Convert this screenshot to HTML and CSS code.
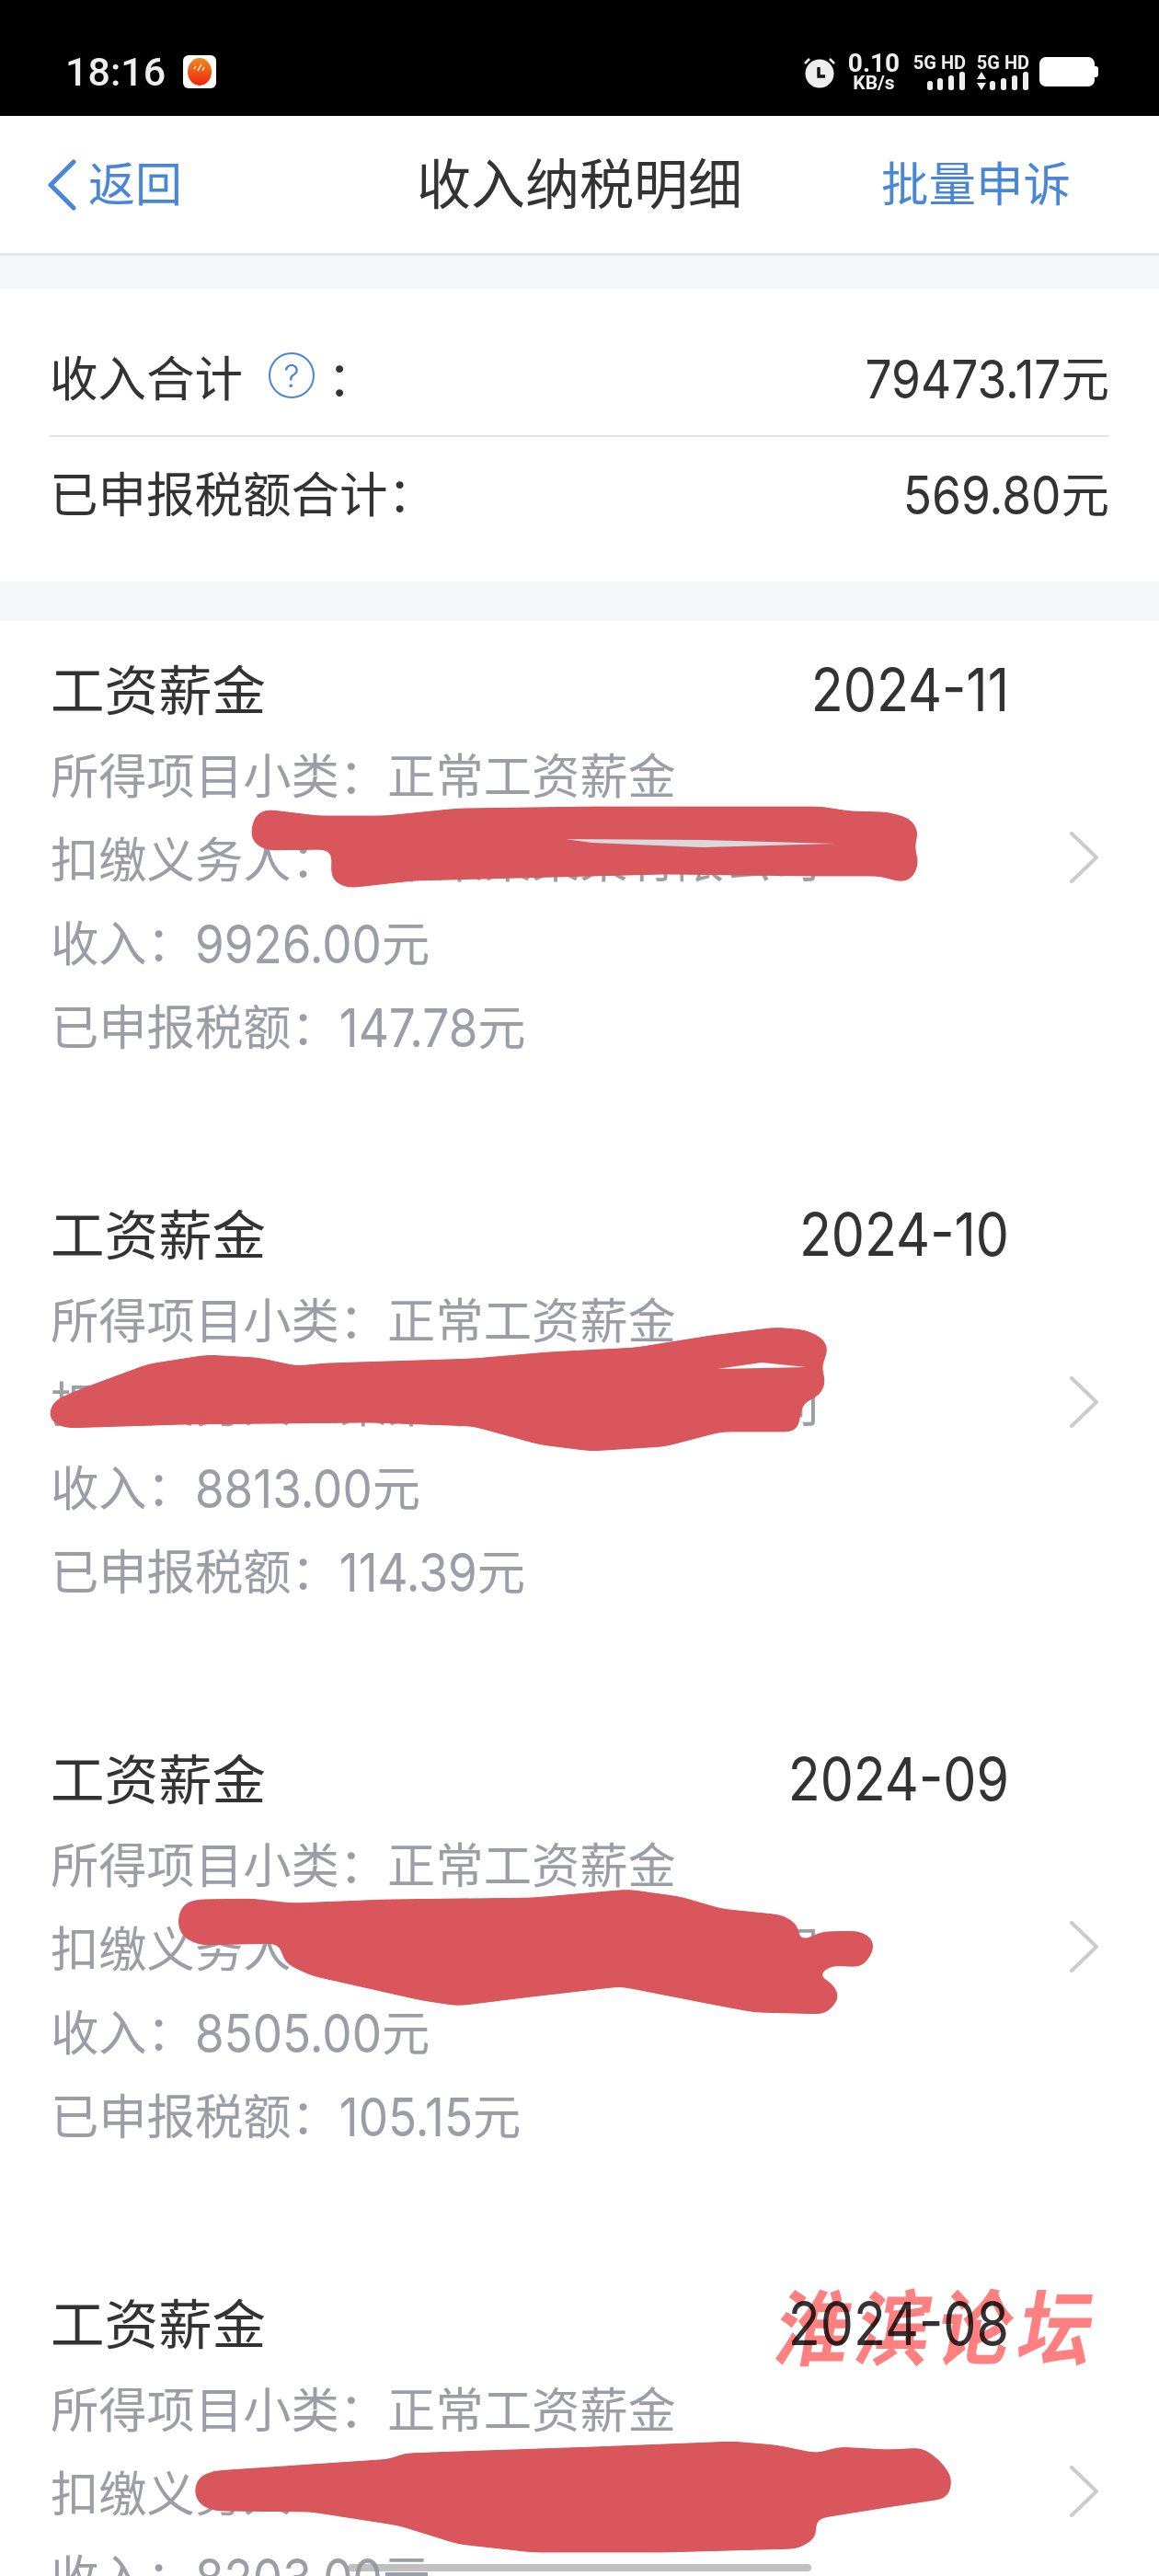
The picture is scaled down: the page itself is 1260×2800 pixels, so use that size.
FILE: index.html
```html
<!DOCTYPE html>
<html lang="zh-CN">
<head>
  <meta charset="UTF-8">
  <meta name="viewport" content="width=device-width, initial-scale=1.0">
  <title>收入纳税明细</title>
  <link rel="stylesheet" href="styles.css">
</head>
<body>

  <div class="status-bar">
    <div class="status-left">
      <span class="clock">18:16</span>
      <svg class="app-icon" width="36" height="36" viewBox="0 0 36 36">
        <defs>
          <linearGradient id="egg" x1="0" y1="0" x2="0" y2="1">
            <stop offset="0" stop-color="#ee8a1c"/>
            <stop offset="1" stop-color="#f0250f"/>
          </linearGradient>
        </defs>
        <rect width="36" height="36" rx="6" fill="#fff"/>
        <ellipse cx="18" cy="18" rx="13" ry="15" fill="url(#egg)"/>
        <path d="M12 15l2-3M16 17l4-7M21 17l2-4" stroke="#ffe3c8" stroke-width="1.6"/>
      </svg>
    </div>
    <div class="status-right">
      <svg class="alarm" width="36" height="36" viewBox="0 0 36 36">
        <circle cx="18" cy="20" r="15.5" fill="#eee"/>
        <path d="M2 9l5-5M34 9l-5-5" stroke="#eee" stroke-width="2.5"/>
        <path d="M17 13v10h7" stroke="#111" stroke-width="3.4" fill="none"/>
      </svg>
      <div class="speed">
        <span class="speed-num">0.10</span>
        <span class="speed-unit">KB/s</span>
      </div>
      <div class="signal">
        <span class="signal-label">5G HD</span>
        <svg width="58" height="20" viewBox="0 0 58 20">
          <rect x="16" y="10" width="6" height="10" rx="2.5" fill="#eee"/>
          <rect x="27" y="7" width="6" height="13" rx="2.5" fill="#eee"/>
          <rect x="39" y="4" width="6" height="16" rx="2.5" fill="#eee"/>
          <rect x="51" y="0" width="6" height="20" rx="2.5" fill="#eee"/>
        </svg>
      </div>
      <div class="signal">
        <span class="signal-label">5G HD</span>
        <svg width="58" height="20" viewBox="0 0 58 20">
          <path d="M6 0l5 8H1zM6 20l5-8H1z" fill="#eee"/>
          <rect x="15" y="10" width="6" height="10" rx="2.5" fill="#eee"/>
          <rect x="27" y="7" width="6" height="13" rx="2.5" fill="#eee"/>
          <rect x="39" y="4" width="6" height="16" rx="2.5" fill="#eee"/>
          <rect x="51" y="0" width="6" height="20" rx="2.5" fill="#eee"/>
        </svg>
      </div>
      <div class="battery"></div>
    </div>
  </div>

  <div class="nav">
    <div class="nav-back">
      <svg width="32" height="56" viewBox="0 0 32 56">
        <path d="M29 3L4 28l25 25" fill="none" stroke="#4a86d8" stroke-width="5" stroke-linecap="round" stroke-linejoin="round"/>
      </svg>
      <span>返回</span>
    </div>
    <div class="nav-title">收入纳税明细</div>
    <div class="nav-action">批量申诉</div>
  </div>

  <div class="summary">
    <div class="summary-row line">
      <div class="summary-label">
        <span>收入合计</span>
        <span class="help">?</span>
        <span>：</span>
      </div>
      <span><span class="num">79473.17</span>元</span>
    </div>
    <div class="summary-row">
      <span>已申报税额合计：</span>
      <span><span class="num">569.80</span>元</span>
    </div>
  </div>

  <div class="list">
    <div class="item">
      <div class="item-main">
        <div class="item-head"><span>工资薪金</span><span class="num">2024-11</span></div>
        <div class="item-line">所得项目小类：正常工资薪金</div>
        <div class="item-line">扣缴义务人：某某某某某某有限公司</div>
        <div class="item-line">收入：<span class="num">9926.00</span>元</div>
        <div class="item-line">已申报税额：<span class="num">147.78</span>元</div>
      </div>
      <svg class="chevron" width="32" height="56" viewBox="0 0 32 56"><path d="M3 2l27 26L3 54" fill="none" stroke="#ccc" stroke-width="4" stroke-linecap="round" stroke-linejoin="round"/></svg>
    </div>
    <div class="item">
      <div class="item-main">
        <div class="item-head"><span>工资薪金</span><span class="num">2024-10</span></div>
        <div class="item-line">所得项目小类：正常工资薪金</div>
        <div class="item-line">扣缴义务人：某某某某某某有限公司</div>
        <div class="item-line">收入：<span class="num">8813.00</span>元</div>
        <div class="item-line">已申报税额：<span class="num">114.39</span>元</div>
      </div>
      <svg class="chevron" width="32" height="56" viewBox="0 0 32 56"><path d="M3 2l27 26L3 54" fill="none" stroke="#ccc" stroke-width="4" stroke-linecap="round" stroke-linejoin="round"/></svg>
    </div>
    <div class="item">
      <div class="item-main">
        <div class="item-head"><span>工资薪金</span><span class="num">2024-09</span></div>
        <div class="item-line">所得项目小类：正常工资薪金</div>
        <div class="item-line">扣缴义务人：某某某某某某有限公司</div>
        <div class="item-line">收入：<span class="num">8505.00</span>元</div>
        <div class="item-line">已申报税额：<span class="num">105.15</span>元</div>
      </div>
      <svg class="chevron" width="32" height="56" viewBox="0 0 32 56"><path d="M3 2l27 26L3 54" fill="none" stroke="#ccc" stroke-width="4" stroke-linecap="round" stroke-linejoin="round"/></svg>
    </div>
    <div class="item">
      <div class="item-main">
        <div class="item-head"><span>工资薪金</span><span class="num">2024-08</span></div>
        <div class="item-line">所得项目小类：正常工资薪金</div>
        <div class="item-line">扣缴义务人：某某某某某某有限公司</div>
        <div class="item-line">收入：<span class="num">8203.00</span>元</div>
        <div class="item-line">&nbsp;</div>
      </div>
      <svg class="chevron" width="32" height="56" viewBox="0 0 32 56"><path d="M3 2l27 26L3 54" fill="none" stroke="#ccc" stroke-width="4" stroke-linecap="round" stroke-linejoin="round"/></svg>
    </div>
  </div>

  <!-- red marker scribbles drawn over the page -->
  <svg class="scribbles" width="1260" height="2800" viewBox="0 0 1260 2800">
    <defs>
      <filter id="round" filterUnits="userSpaceOnUse" x="0" y="0" width="1260" height="2800" color-interpolation-filters="sRGB">
        <feGaussianBlur stdDeviation="7"/>
        <feColorMatrix type="matrix" values="1 0 0 0 0  0 1 0 0 0  0 0 1 0 0  0 0 0 20 -9"/>
      </filter>
    </defs>
    <g fill="#d9565c" filter="url(#round)">
      <path d="M273 903L278 885 289 880 346 887 418 887 498 879 643 877 892 877 924 882 965 883 990 890 999 905 993 920 999 937 992 955 981 959 957 952 884 952 723 950 450 957 378 965 362 958 360 947 362 923 289 924 274 915Z"/>
      <path d="M54 1532L60 1522 88 1510 161 1483 225 1473 281 1476 322 1485 354 1482 514 1477 595 1470 691 1465 772 1452 844 1443 876 1446 895 1455 901 1467 892 1485 898 1503 890 1518 872 1524 867 1556 784 1556 723 1572 643 1577 587 1570 514 1550 402 1546 201 1548 72 1552 54 1545Z"/>
      <path d="M193 2090L198 2070 213 2065 273 2064 318 2069 418 2065 579 2063 683 2054 740 2062 784 2075 852 2082 870 2095 864 2115 892 2100 932 2099 947 2105 951 2117 938 2138 904 2136 876 2152 900 2151 914 2170 898 2189 820 2187 772 2178 675 2159 579 2170 498 2180 458 2174 338 2147 309 2133 305 2112 217 2114 198 2105Z"/>
      <path d="M211 2707L216 2692 233 2686 426 2673 438 2667 643 2660 796 2654 844 2658 888 2667 912 2660 965 2663 1003 2661 1022 2675 1035 2693 1031 2715 965 2725 884 2738 889 2757 868 2770 723 2774 579 2774 498 2765 434 2745 338 2730 233 2729 216 2722Z"/>
    </g>
    <path d="M615 912L764 913 908 917 764 921 643 916Z" fill="#d8d9dc"/>
    <path d="M780 1488L828 1481 876 1486Z" fill="#fff"/>
  </svg>

  <div class="watermark">
    <span>淮</span><span>滨</span><span>论</span><span>坛</span>
  </div>
  <div class="scroll-bar"></div>

</body>
</html>
```

FILE: styles.css
```css
html,
body {
  margin: 0;
  padding: 0;
  height: 2800px;
  overflow: hidden;
}

body {
  position: relative;
  font-family: "Noto Sans CJK SC", "Noto Sans", sans-serif;
  color: #333;
  background-color: #f4f6f9;
}

.status-bar {
  height: 126px;
  box-sizing: border-box;
  padding: 30px 70px 0 71px;
  display: flex;
  justify-content: space-between;
  align-items: center;
  background-color: #000;
  color: #eee;
  font-family: Roboto, sans-serif;
}

.status-left {
  display: flex;
  align-items: center;
  gap: 19px;
}

.clock {
  font-size: 43px;
  font-weight: 500;
}

.status-right {
  display: flex;
  align-items: center;
}

.alarm {
  margin-right: 14px;
}

.speed {
  display: flex;
  flex-direction: column;
  align-items: center;
  width: 54px;
  margin-right: 15px;
  font-weight: 700;
}

.speed-num {
  font-size: 28px;
  line-height: 24px;
}

.speed-unit {
  font-size: 21px;
  line-height: 18px;
}

.signal {
  display: flex;
  flex-direction: column;
  align-items: flex-end;
  width: 58px;
  margin-right: 11px;
}

.signal-label {
  font-size: 20px;
  font-weight: 700;
  line-height: 20px;
  white-space: nowrap;
}

.battery {
  position: relative;
  width: 60px;
  height: 32px;
  background-color: #fff;
  border-radius: 7px;
}

.battery::after {
  content: "";
  position: absolute;
  right: -4px;
  top: 10px;
  width: 4px;
  height: 12px;
  background-color: #fff;
  border-radius: 0 3px 3px 0;
}

.nav {
  height: 149px;
  display: grid;
  grid-template-columns: 1fr auto 1fr;
  align-items: center;
  background-color: #fff;
  border-bottom: 3px solid #e3e5e8;
}

.nav-back {
  display: flex;
  align-items: center;
  gap: 13px;
  padding-left: 51px;
  font-size: 51px;
  color: #4a86d8;
}

.nav-back span {
  padding-bottom: 7px;
}

.nav-title {
  padding-bottom: 8px;
  font-size: 59px;
}

.nav-action {
  justify-self: end;
  padding-right: 96px;
  padding-bottom: 9px;
  font-size: 51.5px;
  color: #4a86d8;
}

.summary {
  margin-top: 36px;
  padding: 35px 54px 33px;
  background-color: #fff;
  font-size: 52.5px;
}

.summary-row {
  height: 124px;
  box-sizing: border-box;
  padding-bottom: 6px;
  display: flex;
  justify-content: space-between;
  align-items: center;
}

.summary-row.line {
  height: 126px;
  border-bottom: 2px solid #e3e5e8;
}

.summary-label {
  display: flex;
  align-items: center;
}

.help {
  width: 46px;
  height: 46px;
  margin-left: 28px;
  margin-right: 14px;
  display: flex;
  justify-content: center;
  align-items: center;
  border: 2px solid #4a86d8;
  border-radius: 50%;
  font-family: Inter, sans-serif;
  font-size: 34px;
  font-weight: 300;
  color: #4a86d8;
}

/* digits in the app are tall and narrow, with a narrow 1 */
.num {
  display: inline-block;
  font-family: Inter, sans-serif;
  font-size: 0.98em;
  transform: scaleY(1.12);
}

.list {
  margin-top: 43px;
  background-color: #fff;
}

.item {
  height: 592px;
  box-sizing: border-box;
  padding: 29px 66px 108px 55px;
  display: flex;
  align-items: center;
}

.item-main {
  flex: 1;
  min-width: 0;
}

.item-head {
  height: 91px;
  box-sizing: border-box;
  padding-bottom: 7px;
  display: flex;
  justify-content: space-between;
  align-items: center;
  font-size: 58.5px;
}

.item-head .num {
  margin-top: 6px;
}

.item-line {
  height: 91px;
  line-height: 91px;
  font-size: 52.3px;
  color: #9b9ea6;
  white-space: nowrap;
}

.chevron {
  margin-left: 65px;
  flex-shrink: 0;
}

.scribbles {
  position: absolute;
  left: 0;
  top: 0;
}

.watermark {
  position: absolute;
  left: 846px;
  top: 2470px;
  display: flex;
  gap: 8px;
  font-size: 80px;
  line-height: 110px;
  font-weight: 700;
  color: #ff8080;
  white-space: nowrap;
  transform: skewX(-10deg) scaleY(1.12);
  mix-blend-mode: multiply;
}

.scroll-bar {
  position: absolute;
  left: 378px;
  top: 2787px;
  width: 504px;
  height: 8px;
  border-radius: 4px;
  background-color: rgba(150, 150, 150, 0.6);
}
```
